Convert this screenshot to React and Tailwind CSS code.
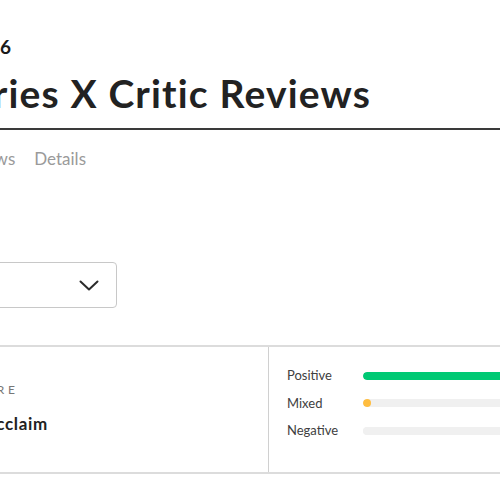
import React from 'react';

const font = { fontFamily: 'Lato, "Open Sans", Arial, sans-serif' };

function ScoreRow({ label, pct, color }) {
  return (
    <div className="flex items-center h-[27.5px]">
      <span className="w-[76px] shrink-0 text-[13px] leading-none text-[#404040]">{label}</span>
      <div className="flex-1 h-[8px] rounded-full bg-[#f0f0f0] overflow-hidden">
        <div
          className="h-full rounded-full"
          style={{ width: pct, minWidth: 8, backgroundColor: color }}
        />
      </div>
    </div>
  );
}

export default function App() {
  return (
    <div className="w-[500px] h-[500px] overflow-hidden bg-white" style={font}>
      {/* platform / date */}
      <div className="pt-[37px] flex justify-end w-[11px]">
        <p className="shrink-0 whitespace-nowrap text-[19px] font-bold leading-none text-[#1a1a1a]">
          Xbox Series X | 2016
        </p>
      </div>

      {/* title */}
      <div className="mt-[18px] pb-[15px] border-b-2 border-[#3a3a3a]">
        <div className="flex justify-end w-[371px]">
          <h1 className="shrink-0 whitespace-nowrap text-[39px] font-bold leading-none tracking-[0.03em] text-[#222]">
            Xbox Series X Critic Reviews
          </h1>
        </div>
      </div>

      {/* tabs */}
      <div className="mt-[20px] flex justify-end w-[86px]">
        <nav className="shrink-0 flex gap-[19px] whitespace-nowrap text-[17px] leading-none text-[#9a9a9a]">
          <span>Summary</span>
          <span>Critic Reviews</span>
          <span>User Reviews</span>
          <span>Details</span>
        </nav>
      </div>

      {/* filter select */}
      <div className="mt-[95px] -ml-[120px] w-[237px] h-[46px] rounded-[4px] border border-[#c8c8c8] flex items-center justify-between pl-4 pr-[17px]">
        <span className="text-[15px] text-[#333]">All Reviews</span>
        <svg width="20" height="11" viewBox="0 0 20 11" fill="none">
          <path d="M1.5 1.5l8.5 8 8.5-8" stroke="#2b2b2b" strokeWidth="2" strokeLinecap="round" strokeLinejoin="round" />
        </svg>
      </div>

      {/* score card */}
      <div className="mt-[37px] -ml-[200px] w-[800px] h-[129px] flex border-y-2 border-l-2 border-[#dcdcdc]">
        <div className="w-[467px] shrink-0 border-r border-[#d0d0d0] pt-[37px]">
          <div className="flex justify-end w-[217px]">
            <p className="shrink-0 whitespace-nowrap text-[12px] leading-none tracking-[0.33em] text-[#777]">
              METASCORE
            </p>
          </div>
          <div className="mt-[19px] flex justify-end w-[246px]">
            <p className="shrink-0 whitespace-nowrap text-[17px] font-bold leading-none tracking-[0.04em] text-[#222]">
              Universal Acclaim
            </p>
          </div>
        </div>
        <div className="flex-1 pl-[18px] pt-[15px] pr-4">
          <ScoreRow label="Positive" pct="100%" color="#00c974" />
          <ScoreRow label="Mixed" pct="0%" color="#ffbd3f" />
          <ScoreRow label="Negative" pct="0%" color="#f0f0f0" />
        </div>
      </div>
    </div>
  );
}
